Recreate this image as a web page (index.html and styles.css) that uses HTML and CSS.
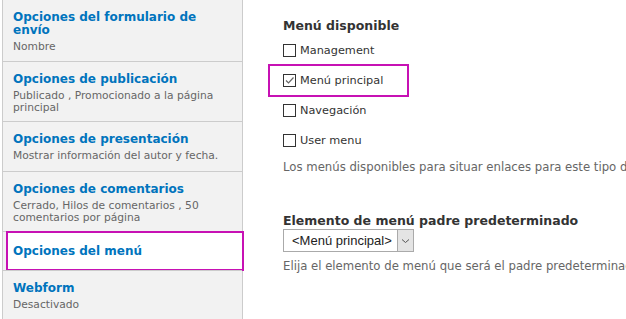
FILE: index.html
```html
<!DOCTYPE html>
<html lang="es">
<head>
    <meta charset="UTF-8">
    <title>Opciones del menú</title>
    <link rel="stylesheet" href="styles.css">
</head>
<body>
    <div class="page">
        <!-- Vertical tabs -->
        <ul class="tabs">
            <li class="tab tab-first">
                <a class="tab-title" href="#">Opciones del formulario de envío</a>
                <span class="tab-summary">Nombre</span>
            </li>
            <li class="tab tab-second">
                <a class="tab-title" href="#">Opciones de publicación</a>
                <span class="tab-summary">Publicado , Promocionado a la página principal</span>
            </li>
            <li class="tab tab-third">
                <a class="tab-title" href="#">Opciones de presentación</a>
                <span class="tab-summary">Mostrar información del autor y fecha.</span>
            </li>
            <li class="tab tab-fourth">
                <a class="tab-title" href="#">Opciones de comentarios</a>
                <span class="tab-summary">Cerrado, Hilos de comentarios , 50 comentarios por página</span>
            </li>
            <li class="tab tab-selected">
                <a class="tab-title" href="#">Opciones del menú</a>
                <span class="highlight"></span>
            </li>
            <li class="tab tab-last">
                <a class="tab-title" href="#">Webform</a>
                <span class="tab-summary">Desactivado</span>
            </li>
        </ul>

        <!-- Tab pane -->
        <div class="pane">
            <div class="field">
                <h3 class="field-label">Menú disponible</h3>
                <div class="options">
                    <label class="option">
                        <span class="box"></span>
                        Management
                    </label>
                    <label class="option option-active">
                        <span class="box">
                            <svg width="11" height="11" viewBox="0 0 11 11"><path d="M2 5.5 L4.5 8 L9.5 2.5" fill="none" stroke="#666" stroke-width="1.2"/></svg>
                        </span>
                        Menú principal
                        <span class="highlight"></span>
                    </label>
                    <label class="option">
                        <span class="box"></span>
                        Navegación
                    </label>
                    <label class="option">
                        <span class="box"></span>
                        User menu
                    </label>
                </div>
                <p class="description">Los menús disponibles para situar enlaces para este tipo de contenido.</p>
            </div>

            <div class="field field-parent">
                <h3 class="field-label">Elemento de menú padre predeterminado</h3>
                <div class="select">
                    <span class="select-value">&lt;Menú principal&gt;</span>
                    <span class="select-arrow">
                        <svg width="9" height="6" viewBox="0 0 9 6"><path d="M1 1.5 L4.5 4.5 L8 1.5" fill="none" stroke="#555" stroke-width="1"/></svg>
                    </span>
                </div>
                <p class="description">Elija el elemento de menú que será el padre predeterminado para los enlaces nuevos.</p>
            </div>
        </div>
    </div>
</body>
</html>
```

FILE: styles.css
```css
/* Base */
* {
    box-sizing: border-box;
    margin: 0;
    padding: 0;
}

body {
    font-family: "DejaVu Sans", Verdana, sans-serif;
    background: #fff;
    color: #333;
    overflow: hidden;
}

.page {
    display: flex;
    align-items: stretch;
    min-height: 319px;
    width: 900px;
}

/* Vertical tabs */
.tabs {
    list-style: none;
    width: 241px;
    margin-left: 2px;
    background: #f2f2f2;
    border-left: 1px solid #ccc;
    border-right: 1px solid #ccc;
    flex-shrink: 0;
}

.tab {
    position: relative;
    display: flex;
    flex-direction: column;
    padding: 11px 10px 6px 10px;
    border-bottom: 1px solid #ccc;
}

.tab-title {
    font-size: 12px;
    line-height: 13px;
    font-weight: bold;
    color: #0074bd;
    text-decoration: none;
}

.tab-summary {
    font-size: 10.7px;
    line-height: 11.5px;
    color: #666;
    margin-top: 4px;
}

.tab-first { height: 62px; }
.tab-second { height: 60px; }
.tab-third { height: 50px; }
.tab-fourth { height: 60px; }

.tab-selected {
    height: 38px;
    background: #fff;
    margin-left: 4px;
    margin-right: -1px;
    padding: 13px 6px 9px;
    border-bottom: none;
}

.tab-last {
    border-top: 1px solid #ccc;
    border-bottom: none;
    padding-top: 11px;
}

/* Magenta highlight frames */
.highlight {
    position: absolute;
    border: 2px solid #c711b4;
    pointer-events: none;
}

.tab-selected .highlight {
    left: -1px;
    right: -1px;
    top: -1px;
    bottom: -1px;
}

/* Pane */
.pane {
    padding: 18px 0 0 40px;
    flex: 1;
}

.field-label {
    font-size: 12.5px;
    line-height: 15px;
    font-weight: bold;
    color: #333;
}

.options {
    display: flex;
    flex-direction: column;
    gap: 15px;
    margin-top: 10px;
}

.option {
    position: relative;
    display: flex;
    align-items: center;
    gap: 4px;
    font-size: 11.3px;
    line-height: 15px;
    color: #333;
}

.option-active .highlight {
    left: -15px;
    top: -9px;
    width: 141px;
    height: 33px;
}

.box {
    display: flex;
    align-items: center;
    justify-content: center;
    width: 13px;
    height: 13px;
    border: 1px solid #333;
    background: #fff;
}

.description {
    font-size: 11.7px;
    line-height: 14px;
    color: #666;
    margin-top: 12px;
    white-space: nowrap;
}

.field-parent {
    margin-top: 39px;
}

/* Select */
.select {
    display: flex;
    width: 131px;
    height: 23px;
    margin-top: 1px;
    border: 1px solid #aaa;
    background: #fff;
}

.select-value {
    flex: 1;
    font-family: "Liberation Sans", Arial, sans-serif;
    font-size: 13px;
    line-height: 21px;
    color: #222;
    padding-left: 8px;
}

.select-arrow {
    display: flex;
    align-items: center;
    justify-content: center;
    width: 16px;
    background: #e4e4e4;
    border-left: 1px solid #aaa;
}

.field-parent .description {
    margin-top: 7px;
}
```
